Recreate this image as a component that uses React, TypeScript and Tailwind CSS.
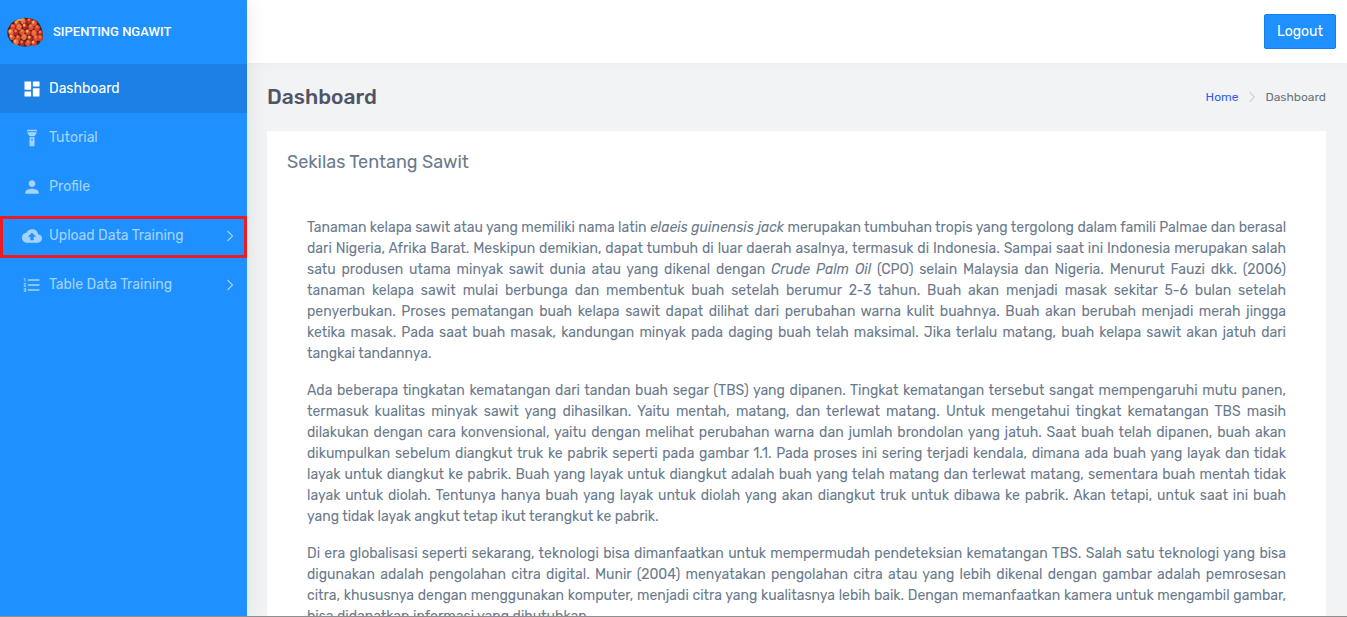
import React from 'react';
import { MdDashboard, MdPerson, MdCloudUpload, MdFormatListNumbered } from 'react-icons/md';

const paragraphs: React.ReactNode[][] = [
  [
    <>Tanaman kelapa sawit atau yang memiliki nama latin <i>elaeis guinensis jack</i> merupakan tumbuhan tropis yang tergolong dalam famili Palmae dan berasal</>,
    'dari Nigeria, Afrika Barat. Meskipun demikian, dapat tumbuh di luar daerah asalnya, termasuk di Indonesia. Sampai saat ini Indonesia merupakan salah',
    <>satu produsen utama minyak sawit dunia atau yang dikenal dengan <i>Crude Palm Oil</i> (CPO) selain Malaysia dan Nigeria. Menurut Fauzi dkk. (2006)</>,
    'tanaman kelapa sawit mulai berbunga dan membentuk buah setelah berumur 2-3 tahun. Buah akan menjadi masak sekitar 5-6 bulan setelah',
    'penyerbukan. Proses pematangan buah kelapa sawit dapat dilihat dari perubahan warna kulit buahnya. Buah akan berubah menjadi merah jingga',
    'ketika masak. Pada saat buah masak, kandungan minyak pada daging buah telah maksimal. Jika terlalu matang, buah kelapa sawit akan jatuh dari',
    'tangkai tandannya.',
  ],
  [
    'Ada beberapa tingkatan kematangan dari tandan buah segar (TBS) yang dipanen. Tingkat kematangan tersebut sangat mempengaruhi mutu panen,',
    'termasuk kualitas minyak sawit yang dihasilkan. Yaitu mentah, matang, dan terlewat matang. Untuk mengetahui tingkat kematangan TBS masih',
    'dilakukan dengan cara konvensional, yaitu dengan melihat perubahan warna dan jumlah brondolan yang jatuh. Saat buah telah dipanen, buah akan',
    'dikumpulkan sebelum diangkut truk ke pabrik seperti pada gambar 1.1. Pada proses ini sering terjadi kendala, dimana ada buah yang layak dan tidak',
    'layak untuk diangkut ke pabrik. Buah yang layak untuk diangkut adalah buah yang telah matang dan terlewat matang, sementara buah mentah tidak',
    'layak untuk diolah. Tentunya hanya buah yang layak untuk diolah yang akan diangkut truk untuk dibawa ke pabrik. Akan tetapi, untuk saat ini buah',
    'yang tidak layak angkut tetap ikut terangkut ke pabrik.',
  ],
  [
    'Di era globalisasi seperti sekarang, teknologi bisa dimanfaatkan untuk mempermudah pendeteksian kematangan TBS. Salah satu teknologi yang bisa',
    'digunakan adalah pengolahan citra digital. Munir (2004) menyatakan pengolahan citra atau yang lebih dikenal dengan gambar adalah pemrosesan',
    'citra, khususnya dengan menggunakan komputer, menjadi citra yang kualitasnya lebih baik. Dengan memanfaatkan kamera untuk mengambil gambar,',
    'bisa didapatkan informasi yang dibutuhkan.',
  ],
];

function Flashlight() {
  return (
    <svg viewBox="0 0 24 24" width="20" height="20" fill="currentColor" aria-hidden="true">
      <path d="M9 10L6 5h12l-3 5H9zM18 4H6V2h12v2zM9 22V11h6v11H9zm3-9a1 1 0 1 0 0 2 1 1 0 0 0 0-2z" />
    </svg>
  );
}

function Chevron({ className }: { className: string }) {
  return (
    <svg viewBox="0 0 8 12" width="8" height="12" fill="none" stroke="currentColor" strokeWidth="1.1" className={className} aria-hidden="true">
      <path d="M1.5 1L6.5 6L1.5 11" />
    </svg>
  );
}

const fruits = [
  [10, 6], [16, 4], [22, 4], [27, 6], [6, 10], [12, 10], [18, 9], [24, 10], [30, 11],
  [4, 15], [9, 15], [15, 15], [21, 15], [27, 16], [33, 16], [5, 20], [11, 21], [17, 20],
  [23, 21], [29, 21], [33, 21], [9, 25], [15, 26], [21, 26], [27, 26],
];
const fruitColors = ['#d9412a', '#f06a3c', '#b92b24', '#e85032'];

function Logo() {
  return (
    <svg viewBox="0 0 36 30" width="36" height="30" aria-hidden="true">
      <path d="M3 8Q6 3 12 3Q15 0 20 1L25 2Q31 3 33 8L35 12L36 22Q33 24 32 27Q28 29 25 28Q18 31 11 28Q4 27 1 20Q-1 13 3 8Z" fill="#43251c" />
      {fruits.map(([x, y], i) => (
        <g key={i} transform={`rotate(${(i % 3) * 25 - 25} ${x} ${y})`}>
          <ellipse cx={x} cy={y} rx="2.7" ry="3.1" fill={fruitColors[i % 4]} />
          <ellipse cx={x - 0.4} cy={y - 1} rx="1.3" ry="1.4" fill={i % 3 ? '#f07a4c' : '#f7b468'} />
        </g>
      ))}
      <path d="M8 5Q11 1 17 2L15 4Q11 3 9 6Z" fill="#d5a64b" />
    </svg>
  );
}

const items = [
  { label: 'Dashboard', icon: <MdDashboard size={20} />, active: true },
  { label: 'Tutorial', icon: <Flashlight /> },
  { label: 'Profile', icon: <MdPerson size={20} /> },
  { label: 'Upload Data Training', icon: <MdCloudUpload size={20} />, sub: true, marked: true },
  { label: 'Table Data Training', icon: <MdFormatListNumbered size={20} />, sub: true },
];

export default function App() {
  return (
    <div className="flex h-screen overflow-hidden border-b border-[#8f8f8f] bg-[#f2f3f5] font-['Rubik','Inter',sans-serif] text-sm text-[#67757c]">
      <aside className="z-10 w-[247px] shrink-0 bg-[#1e90ff] shadow-[1px_0_20px_rgba(0,0,0,0.08)]">
        <a href="#" className="flex h-16 items-center gap-2.5 pl-[7px] font-['Roboto',sans-serif] text-[13px] font-medium text-white">
          <Logo />
          SIPENTING NGAWIT
        </a>
        <nav>
          <ul>
            {items.map((item) => (
              <li key={item.label} className="relative">
                <a
                  href="#"
                  className={`flex h-[49px] items-center pr-[13px] pl-[22px] ${item.active ? 'bg-[#1d80e4] text-white' : 'text-[#a5d3ff]'}`}
                >
                  <span className="mr-[7px] shrink-0">{item.icon}</span>
                  <span className="flex-1">{item.label}</span>
                  {item.sub && <Chevron className="shrink-0" />}
                </a>
                {item.marked && <span className="pointer-events-none absolute inset-x-0 top-[5px] bottom-[2px] border-3 border-[#ed1c24]" />}
              </li>
            ))}
          </ul>
        </nav>
      </aside>

      <div className="flex min-w-0 flex-1 flex-col">
        <header className="flex h-[63px] shrink-0 items-center justify-end bg-white pr-[11px] shadow-[0_1px_10px_rgba(0,0,0,0.03)]">
          <button type="button" className="h-[35px] rounded-xs border border-[#147fe8] bg-[#1e90ff] px-3 text-sm text-white">
            Logout
          </button>
        </header>

        <main className="min-h-0 flex-1 overflow-hidden pr-[21px] pl-5">
          <div className="flex h-[68px] items-center justify-between">
            <h1 className="text-[21px] font-medium text-[#4f5467]">Dashboard</h1>
            <nav aria-label="Breadcrumb" className="flex items-center text-xs">
              <a href="#" className="text-[#2f5bf3]">Home</a>
              <Chevron className="mr-[9px] ml-2.5 text-[#cfd4da]" />
              <span>Dashboard</span>
            </nav>
          </div>

          <section className="bg-white p-5 text-[#6a7a8c]">
            <h2 className="text-lg leading-[22px]">Sekilas Tentang Sawit</h2>
            <div className="px-5 pt-[44px]">
              {paragraphs.map((lines, p) => (
                <p key={p} className="mb-4 leading-[21px]">
                  {lines.map((line, i) => (
                    <span
                      key={i}
                      className={`block whitespace-nowrap ${i < lines.length - 1 ? '[text-align-last:justify]' : ''}`}
                    >
                      {line}{' '}
                    </span>
                  ))}
                </p>
              ))}
            </div>
          </section>
        </main>
      </div>
    </div>
  );
}
